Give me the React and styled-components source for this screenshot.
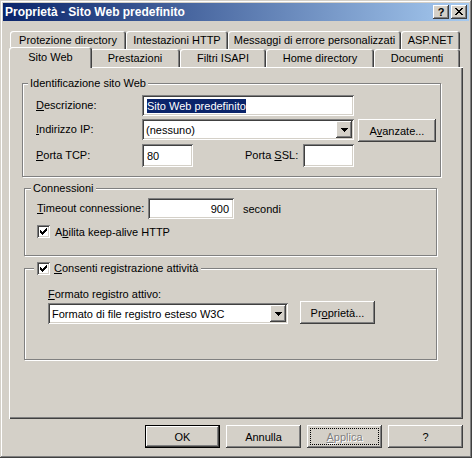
import React from 'react'
import styled, { createGlobalStyle, css } from 'styled-components'

const GlobalStyle = createGlobalStyle`
  html, body {
    margin: 0;
    padding: 0;
    background: #d4d0c8;
  }
  body {
    font-family: "Liberation Sans", Arial, sans-serif;
    font-size: 11px;
    color: #000;
  }
  * {
    box-sizing: border-box;
  }
`

const raised = css`
  background: #d4d0c8;
  box-shadow: inset -1px -1px #404040, inset 1px 1px #ffffff,
    inset -2px -2px #808080, inset 2px 2px #d4d0c8;
`

const sunken = css`
  background: #ffffff;
  box-shadow: inset 1px 1px #808080, inset -1px -1px #ffffff,
    inset 2px 2px #404040, inset -2px -2px #d4d0c8;
`

const Window = styled.div`
  width: 472px;
  height: 458px;
  padding: 3px;
  display: flex;
  flex-direction: column;
  background: #d4d0c8;
  box-shadow: inset -1px -1px #404040, inset 1px 1px #d4d0c8,
    inset -2px -2px #808080, inset 2px 2px #ffffff;
`

const TitleBar = styled.div`
  height: 18px;
  flex: none;
  display: flex;
  align-items: center;
  padding: 0 2px 0 2px;
  background: linear-gradient(to right, #0a246a, #a6caf0);
  color: #ffffff;
  font-weight: bold;
  font-size: 12px;
`

const TitleText = styled.span`
  flex: 1;
  white-space: nowrap;
`

const CaptionButtons = styled.div`
  display: flex;
  gap: 2px;
`

const CaptionButton = styled.div`
  ${raised};
  width: 16px;
  height: 14px;
  display: flex;
  align-items: center;
  justify-content: center;
  color: #000;
  font-weight: bold;
  font-size: 11px;
  line-height: 14px;
  padding-bottom: 1px;
  & svg {
    display: block;
  }
`

const Body = styled.div`
  flex: 1;
  display: flex;
  flex-direction: column;
  padding: 10px 6px 7px 6px;
`

const TabStrip = styled.div`
  display: flex;
  flex-direction: column;
  flex: none;
`

const TabRow = styled.div`
  display: flex;
  height: 18px;
  padding-left: ${p => p.$indent}px;
`

const Tab = styled.div`
  position: relative;
  flex: none;
  width: ${p => p.$w}px;
  height: 18px;
  display: flex;
  align-items: center;
  justify-content: center;
  white-space: nowrap;
  background: #d4d0c8;
  border-radius: 3px 3px 0 0;
  box-shadow: inset 1px 1px #ffffff, inset -1px 0 #404040, inset -2px 0 #808080;
  ${p =>
    p.$active &&
    css`
      width: ${p.$w + 4}px;
      height: 21px;
      margin: -2px -2px -1px -2px;
      padding-bottom: 1px;
      z-index: 1;
    `}
`

const Panel = styled.div`
  flex: 1;
  display: flex;
  flex-direction: column;
  background: #d4d0c8;
  box-shadow: inset 1px 1px #ffffff, inset -1px -1px #404040, inset -2px -2px #808080;
`

const Group = styled.fieldset`
  margin: ${p => p.$top}px 0 0 ${p => p.$left}px;
  width: ${p => p.$w}px;
  min-width: 0;
  padding: 0 0 ${p => p.$pb}px 0;
  border: 1px solid #808080;
  box-shadow: inset 1px 1px #ffffff, 1px 1px #ffffff;
`

const Legend = styled.legend`
  margin-left: ${p => p.$ml}px;
  padding: 0 ${p => p.$pr ?? 2}px 0 ${p => p.$pl ?? 2}px;
  height: 13px;
  line-height: 13px;
  display: flex;
  align-items: center;
  gap: 4px;
  background: #d4d0c8;
  white-space: nowrap;
`

const Row = styled.div`
  display: flex;
  align-items: ${p => p.$align || 'center'};
  height: ${p => p.$h}px;
  margin-top: ${p => p.$mt || 0}px;
  padding-left: ${p => p.$pl || 0}px;
`

const Label = styled.label`
  display: block;
  flex: none;
  width: ${p => (p.$w ? `${p.$w}px` : 'auto')};
  line-height: ${p => p.$h || 13}px;
  margin-left: ${p => p.$ml || 0}px;
  white-space: nowrap;
`

const Caption = styled.div`
  margin-top: ${p => p.$mt}px;
  padding-left: ${p => p.$pl}px;
  height: 13px;
  line-height: 13px;
`

const Edit = styled.div`
  ${sunken};
  flex: none;
  width: ${p => p.$w}px;
  height: ${p => p.$h}px;
  display: flex;
  align-items: center;
  justify-content: ${p => (p.$right ? 'flex-end' : 'flex-start')};
  padding: 0 5px 0 5px;
  white-space: nowrap;
`

const Selected = styled.span`
  background: #0a246a;
  color: #ffffff;
  line-height: 14px;
`

const Combo = styled.div`
  ${sunken};
  flex: none;
  width: ${p => p.$w}px;
  height: 21px;
  margin-top: ${p => p.$mt || 0}px;
  display: flex;
  align-items: center;
  padding: 2px;
`

const ComboText = styled.span`
  flex: 1;
  padding-left: ${p => p.$pl || 2}px;
  white-space: nowrap;
`

const DropButton = styled.div`
  ${raised};
  width: 16px;
  height: 17px;
  display: flex;
  align-items: center;
  justify-content: center;
  & svg {
    display: block;
  }
`

const Button = styled.button`
  ${raised};
  flex: none;
  width: ${p => p.$w}px;
  height: 23px;
  margin-left: ${p => p.$ml || 0}px;
  border: none;
  padding: 0;
  font: inherit;
  color: #000;
  white-space: nowrap;
  ${p =>
    p.$default &&
    css`
      border: 1px solid #000;
    `}
  ${p =>
    p.disabled &&
    css`
      color: #808080;
      text-shadow: 1px 1px #ffffff;
    `}
  ${p =>
    p.$focus &&
    css`
      outline: 1px dotted #000;
      outline-offset: -4px;
    `}
`

const CheckBox = styled.span`
  ${sunken};
  display: block;
  flex: none;
  width: 13px;
  height: 13px;
  margin-left: ${p => p.$ml || 0}px;
  & svg {
    display: block;
  }
`

const Text = styled.span`
  margin-left: ${p => p.$ml || 0}px;
  white-space: nowrap;
`

const Footer = styled.div`
  flex: none;
  display: flex;
  justify-content: flex-end;
  gap: 6px;
  margin-top: 6px;
`

const CloseGlyph = () => (
  <svg width="8" height="7" viewBox="0 0 8 7" shapeRendering="crispEdges">
    <path
      fill="#000"
      d="M0 0h2v1h-2z M6 0h2v1h-2z M1 1h2v1h-2z M5 1h2v1h-2z M2 2h4v1h-4z M3 3h2v1h-2z M2 4h4v1h-4z M1 5h2v1h-2z M5 5h2v1h-2z M0 6h2v1h-2z M6 6h2v1h-2z"
    />
  </svg>
)

const ArrowGlyph = () => (
  <svg width="7" height="4" viewBox="0 0 7 4" shapeRendering="crispEdges">
    <path fill="#000" d="M0 0h7v1h-7z M1 1h5v1h-5z M2 2h3v1h-3z M3 3h1v1h-1z" />
  </svg>
)

const Check = ({ ml }) => (
  <CheckBox $ml={ml}>
    <svg width="13" height="13" viewBox="0 0 13 13" shapeRendering="crispEdges">
      <path
        fill="#000"
        d="M3 5h1v3h-1z M4 6h1v3h-1z M5 7h1v3h-1z M6 6h1v3h-1z M7 5h1v3h-1z M8 4h1v3h-1z M9 3h1v3h-1z"
      />
    </svg>
  </CheckBox>
)

const backTabs = [
  { label: 'Protezione directory', w: 116 },
  { label: 'Intestazioni HTTP', w: 102 },
  { label: 'Messaggi di errore personalizzati', w: 173 },
  { label: 'ASP.NET', w: 59 },
]

const frontTabs = [
  { label: 'Sito Web', w: 79, active: true },
  { label: 'Prestazioni', w: 90 },
  { label: 'Filtri ISAPI', w: 86 },
  { label: 'Home directory', w: 108 },
  { label: 'Documenti', w: 86 },
]

export default function App() {
  return (
    <>
      <GlobalStyle />
      <Window>
        <TitleBar>
          <TitleText>Proprietà - Sito Web predefinito</TitleText>
          <CaptionButtons>
            <CaptionButton>?</CaptionButton>
            <CaptionButton>
              <CloseGlyph />
            </CaptionButton>
          </CaptionButtons>
        </TitleBar>
        <Body>
          <TabStrip>
            <TabRow $indent={1}>
              {backTabs.map(t => (
                <Tab key={t.label} $w={t.w}>
                  {t.label}
                </Tab>
              ))}
            </TabRow>
            <TabRow $indent={2}>
              {frontTabs.map(t => (
                <Tab key={t.label} $w={t.w} $active={t.active}>
                  {t.label}
                </Tab>
              ))}
            </TabRow>
          </TabStrip>
          <Panel>
            <Group $top={10} $left={13} $w={419} $pb={9}>
              <Legend $ml={5}>Identificazione sito Web</Legend>
              <Row $mt={5} $h={21} $pl={13}>
                <Label $w={106}>
                  <u>D</u>escrizione:
                </Label>
                <Edit $w={212} $h={21}>
                  <Selected>Sito Web predefinito</Selected>
                </Edit>
              </Row>
              <Row $mt={3} $h={23} $pl={13} $align="flex-start">
                <Label $w={106} $h={21}>
                  <u>I</u>ndirizzo IP:
                </Label>
                <Combo $w={212}>
                  <ComboText>(nessuno)</ComboText>
                  <DropButton>
                    <ArrowGlyph />
                  </DropButton>
                </Combo>
                <Button $w={78} $ml={4}>
                  A<u>v</u>anzate...
                </Button>
              </Row>
              <Row $mt={2} $h={23} $pl={13}>
                <Label $w={106}>
                  <u>P</u>orta TCP:
                </Label>
                <Edit $w={51} $h={23}>80</Edit>
                <Label $w={58} $ml={52}>
                  Porta <u>S</u>SL:
                </Label>
                <Edit $w={51} $h={23} />
              </Row>
            </Group>

            <Group $top={5} $left={15} $w={413} $pb={17}>
              <Legend $ml={6}>Connessioni</Legend>
              <Row $mt={3} $h={21} $pl={12}>
                <Label $w={111}>
                  <u>T</u>imeout connessione:
                </Label>
                <Edit $w={86} $h={21} $right>
                  900
                </Edit>
                <Text $ml={9}>secondi</Text>
              </Row>
              <Row $mt={6} $h={13} $pl={12}>
                <Check />
                <Text $ml={5}>
                  A<u>b</u>ilita keep-alive HTTP
                </Text>
              </Row>
            </Group>

            <Group $top={6} $left={15} $w={413} $pb={35}>
              <Legend $ml={9} $pl={3} $pr={3}>
                <Check />
                <span>
                  <u>C</u>onsenti registrazione attività
                </span>
              </Legend>
              <Caption $mt={13} $pl={23}>
                <u>F</u>ormato registro attivo:
              </Caption>
              <Row $h={23} $pl={23} $align="flex-start">
                <Combo $w={240} $mt={2}>
                  <ComboText $pl={2}>Formato di file registro esteso W3C</ComboText>
                  <DropButton>
                    <ArrowGlyph />
                  </DropButton>
                </Combo>
                <Button $w={75} $ml={12}>
                  Pr<u>o</u>prietà...
                </Button>
              </Row>
            </Group>
          </Panel>
          <Footer>
            <Button $w={75} $default>
              OK
            </Button>
            <Button $w={75}>Annulla</Button>
            <Button $w={75} disabled $focus>
              <u>A</u>pplica
            </Button>
            <Button $w={75}>?</Button>
          </Footer>
        </Body>
      </Window>
    </>
  )
}
